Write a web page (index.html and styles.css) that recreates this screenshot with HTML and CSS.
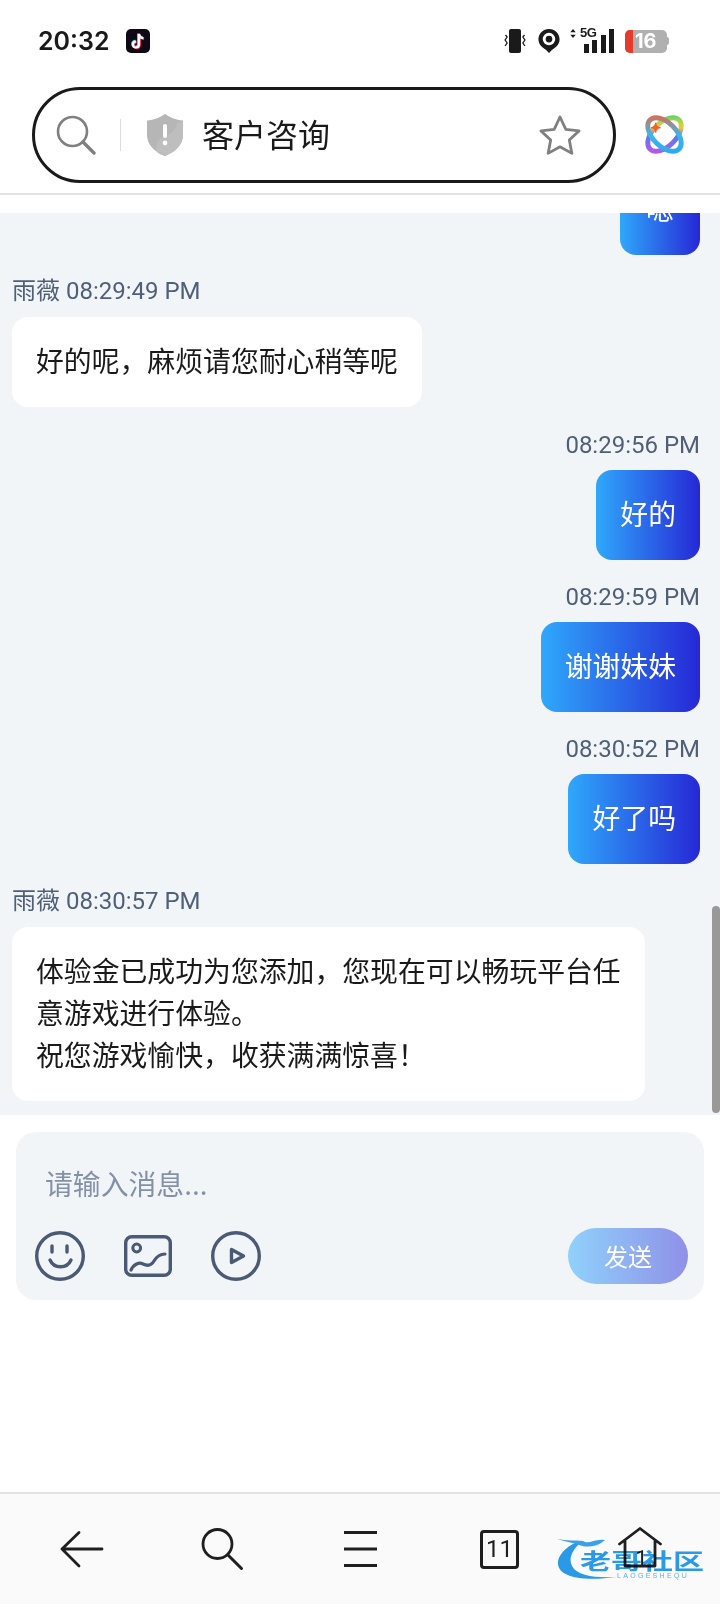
FILE: index.html
```html
<!DOCTYPE html>
<html lang="zh">
<head>
<meta charset="utf-8">
<title>客户咨询</title>
<link rel="stylesheet" href="styles.css">
</head>
<body>
<div class="page">
  <header class="status">
    <div class="status-left">
      <span class="clock">20:32</span>
      <svg class="tiktok" viewBox="0 0 24 24">
        <rect width="24" height="24" rx="5" fill="#0d0a16"/>
        <path d="M13 5v10.500a3 3 0 1 1-3-3M13 5c.3 2.600 2 4 4.400 4.200" fill="none" stroke="#25f4ee" stroke-width="2.400" transform="translate(-.7 -.5)"/>
        <path d="M13 5v10.500a3 3 0 1 1-3-3M13 5c.3 2.600 2 4 4.400 4.200" fill="none" stroke="#fe2c55" stroke-width="2.400" transform="translate(.7 .5)"/>
        <path d="M13 5v10.500a3 3 0 1 1-3-3M13 5c.3 2.600 2 4 4.400 4.200" fill="none" stroke="#fff" stroke-width="2.200"/>
      </svg>
    </div>
    <div class="status-right">
      <svg class="ic-vib" viewBox="0 0 24 24">
        <rect x="6" y="0" width="12" height="24" rx="2" fill="#1a1a1a"/>
        <path d="M2.500 6l1.600 2-2 3 2 3-2 3M21.500 6l-1.600 2 2 3-2 3 2 3" fill="none" stroke="#1a1a1a" stroke-width="1.300"/>
      </svg>
      <svg class="ic-pin" viewBox="0 0 22 25">
        <path d="M11 0C4.900 0 0 4.800 0 10.800c0 5.600 4.200 8.800 8 11.200l3 3 3-3c3.800-2.400 8-5.600 8-11.200C22 4.800 17.100 0 11 0z" fill="#1a1a1a"/>
        <circle cx="11" cy="10.500" r="6.500" fill="#fff"/>
        <circle cx="11" cy="10.500" r="3.500" fill="#1a1a1a"/>
      </svg>
      <div class="signal">
        <span class="net">5G</span>
        <svg class="arrows" viewBox="0 0 6 10"><path d="M3 0l3 3.700H0zM3 10L0 6.300h6z" fill="#1a1a1a"/></svg>
        <i class="bar b1"></i><i class="bar b2"></i><i class="bar b3"></i><i class="bar b4"></i>
      </div>
      <div class="battery"><i class="charge"></i><span class="level">16</span></div>
      <i class="battery-tip"></i>
    </div>
  </header>

  <nav class="topbar">
    <div class="address">
      <svg class="ic-search" viewBox="0 0 40 40">
        <circle cx="16.500" cy="16.500" r="14.500" fill="none" stroke="#808080" stroke-width="2.600"/>
        <path d="M27 27l11 11" stroke="#808080" stroke-width="3.400" stroke-linecap="round"/>
      </svg>
      <i class="divider"></i>
      <svg class="ic-shield" viewBox="0 0 36 42">
        <path d="M18 0c4 3 11 6 18 6.500V21c0 10-8 17-18 21C8 38 0 31 0 21V6.500C7 6 14 3 18 0z" fill="#b6b6b6"/>
        <path d="M10 38c-2-8 2-14 8-16 6-2 10-6 12-12l6-3V21c0 10-8 17-18 21-3-1-6-2-8-4z" fill="#bebebe"/>
        <rect x="16" y="10" width="4" height="14" rx="2" fill="#fff"/>
        <circle cx="18" cy="29" r="2.400" fill="#fff"/>
      </svg>
      <span class="page-title">客户咨询</span>
      <svg class="ic-star" viewBox="0 0 42 40">
        <path d="M21 2l5.800 12.400 13.200 1.500-9.700 9.200 2.600 13.300L21 31.800 9.100 38.400l2.600-13.300L2 15.900l13.200-1.500z" fill="none" stroke="#808080" stroke-width="2.800" stroke-linejoin="round"/>
      </svg>
    </div>
    <svg class="ic-app" viewBox="0 0 40 40">
      <defs>
        <linearGradient id="loop-a" gradientUnits="userSpaceOnUse" x1="4" y1="4" x2="36" y2="36">
          <stop offset="0" stop-color="#f4603a"/>
          <stop offset=".5" stop-color="#3fb6e8"/>
          <stop offset="1" stop-color="#27a8f0"/>
        </linearGradient>
        <linearGradient id="loop-b" gradientUnits="userSpaceOnUse" x1="36" y1="4" x2="4" y2="36">
          <stop offset="0" stop-color="#3cc98a"/>
          <stop offset=".2" stop-color="#a8d64a"/>
          <stop offset=".35" stop-color="#f7c43a"/>
          <stop offset=".55" stop-color="#5a78f0"/>
          <stop offset="1" stop-color="#d04fe0"/>
        </linearGradient>
      </defs>
      <ellipse cx="20" cy="20" rx="21" ry="12" transform="rotate(-45 20 20)" fill="none" stroke="url(#loop-b)" stroke-width="5"/>
      <ellipse cx="20" cy="20" rx="21" ry="12" transform="rotate(45 20 20)" fill="none" stroke="url(#loop-a)" stroke-width="5"/>
      <path d="M11 7.500c.6 3.200 1.800 4.400 5 5-3.200.6-4.400 1.800-5 5-.6-3.200-1.800-4.400-5-5 3.200-.6 4.400-1.800 5-5z" fill="#f2602a" stroke="#f2602a" stroke-width="1" transform="translate(0 .5)"/>
    </svg>
  </nav>

  <main class="chat">
    <div class="thread">
      <div class="msg user">
        <div class="bubble bubble-min">嗯</div>
      </div>
      <div class="msg agent">
        <div class="meta">雨薇 08:29:49 PM</div>
        <div class="bubble">好的呢，麻烦请您耐心稍等呢</div>
      </div>
      <div class="msg user">
        <div class="meta">08:29:56 PM</div>
        <div class="bubble">好的</div>
      </div>
      <div class="msg user">
        <div class="meta">08:29:59 PM</div>
        <div class="bubble">谢谢妹妹</div>
      </div>
      <div class="msg user">
        <div class="meta">08:30:52 PM</div>
        <div class="bubble">好了吗</div>
      </div>
      <div class="msg agent">
        <div class="meta">雨薇 08:30:57 PM</div>
        <div class="bubble">体验金已成功为您添加，您现在可以畅玩平台任<br>意游戏进行体验。<br>祝您游戏愉快，收获满满惊喜！</div>
      </div>
    </div>
    <i class="scrollbar"></i>
  </main>

  <section class="composer">
    <div class="card">
      <div class="placeholder">请输入消息...</div>
      <div class="tools">
        <svg class="tool" viewBox="0 0 50 50">
          <circle cx="25" cy="25" r="23.300" fill="none" stroke="#4a5a75" stroke-width="3.400"/>
          <path d="M17 15v6M32 15v6" stroke="#4a5a75" stroke-width="3.400" stroke-linecap="round"/>
          <path d="M15 29c4 9 17 9 21 0" fill="none" stroke="#4a5a75" stroke-width="3.400" stroke-linecap="round"/>
        </svg>
        <svg class="tool tool-img" viewBox="0 0 48 42">
          <rect x="1.700" y="1.700" width="44.600" height="38.600" rx="6" fill="none" stroke="#4a5a75" stroke-width="3.400"/>
          <circle cx="12.700" cy="13" r="3.900" fill="none" stroke="#4a5a75" stroke-width="3"/>
          <path d="M7 35c3-6 8-8 12-6s8 2 11-3 6-7 11-7" fill="none" stroke="#4a5a75" stroke-width="3.200" stroke-linecap="round"/>
        </svg>
        <svg class="tool tool-play" viewBox="0 0 50 50">
          <circle cx="25" cy="25" r="23.300" fill="none" stroke="#4a5a75" stroke-width="3.400"/>
          <path d="M20.500 18.500v13l12-6.500z" fill="none" stroke="#4a5a75" stroke-width="3.400" stroke-linejoin="round"/>
        </svg>
        <button class="send">发送</button>
      </div>
    </div>
  </section>

  <footer class="navbar">
    <svg class="nav-ic" viewBox="0 0 44 36">
      <path d="M42 18H2M19 1.500L2 18l17 17" fill="none" stroke="#1f1f1f" stroke-width="2.800" stroke-linecap="round" stroke-linejoin="round"/>
    </svg>
    <svg class="nav-ic" viewBox="0 0 44 44">
      <circle cx="17.500" cy="17" r="14.500" fill="none" stroke="#1f1f1f" stroke-width="2.800"/>
      <path d="M28.500 28.500l13 13" stroke="#1f1f1f" stroke-width="3" stroke-linecap="round"/>
    </svg>
    <svg class="nav-ic" viewBox="0 0 44 36">
      <path d="M5 1.500h33M5 18h33M5 34.500h33" stroke="#1f1f1f" stroke-width="2.800"/>
    </svg>
    <div class="tabs">11</div>
    <div class="home">
      <svg class="home-ic" viewBox="0 0 44 44">
        <path d="M1.500 17L22 1.500 42.500 17M7 14v25h30V14" fill="none" stroke="#1f1f1f" stroke-width="2.800" stroke-linecap="round" stroke-linejoin="round"/>
      </svg>
      <span class="home-num">1</span>
    </div>
    <div class="watermark">
      <svg class="dragon" viewBox="0 0 150 50">
        <path d="M22 10C8 16 2 26 3 32c1 12 21 18 59 13-22 1-40-1-45-11-4-8 1-16 7-22z" fill="#2b9ceb"/>
        <path d="M2 7c10 2 18 1 26 2 6 4 12-3 22-1l-4 3c-6 4-16 5-24 1C14 10 8 9 2 7z" fill="#3aa4ee"/>
      </svg>
      <span class="wm-title">老哥社区</span>
      <span class="wm-sub">LAOGESHEQU</span>
    </div>
  </footer>
</div>
</body>
</html>
```
FILE: styles.css
```css
* { box-sizing: border-box; }
html, body { margin: 0; padding: 0; background: #fff; }
body { font-family: Roboto, "Noto Sans CJK SC", sans-serif; }
.page { width: 720px; height: 1604px; display: flex; flex-direction: column; overflow: hidden; }

.status { height: 87px; padding: 24px 51px 0 38px; display: flex; justify-content: space-between; align-items: flex-start; flex: none; }
.status-left { display: flex; align-items: center; gap: 16px; height: 34px; }
.clock { font: 600 25px/34px Inter, Roboto, sans-serif; color: #1a1a1a; }
.tiktok { width: 24px; height: 24px; }
.status-right { display: flex; align-items: center; height: 34px; }
.ic-vib { width: 24px; height: 24px; margin-right: 11px; }
.ic-pin { width: 22px; height: 24px; margin-right: 10px; }
.signal { position: relative; width: 44px; height: 24px; display: flex; align-items: flex-end; justify-content: flex-end; gap: 3.500px; margin-right: 11px; }
.net { position: absolute; left: 10px; top: -3px; font: 700 13px/14px "Liberation Sans", sans-serif; color: #1a1a1a; letter-spacing: -0.5px; }
.arrows { position: absolute; left: 0; top: 0; width: 6px; height: 9px; }
.bar { width: 5px; background: #1a1a1a; display: block; }
.b1 { height: 9px; } .b2 { height: 13px; } .b3 { height: 18px; } .b4 { height: 24px; }
.battery { width: 42px; height: 23px; background: #b0b0b0; border-radius: 5px; display: flex; align-items: center; overflow: hidden; }
.charge { width: 8px; height: 23px; background: #e63a2c; display: block; }
.level { font: 700 20px/23px Inter, Roboto, sans-serif; color: #fff; margin-left: 2px; }
.battery-tip { width: 2px; height: 8px; background: #b0b0b0; display: block; border-radius: 0 2px 2px 0; }

.topbar { height: 108px; flex: none; display: flex; align-items: flex-start; border-bottom: 2px solid #e2e2e2; padding-left: 32px; }
.address { width: 584px; height: 96px; border: 3px solid #1a1a1a; border-radius: 48px; display: flex; align-items: center; padding-left: 21px; }
.ic-search { width: 40px; height: 40px; margin-right: 24px; }
.divider { width: 1px; height: 32px; background: #dcdcdc; display: block; margin-right: 26px; }
.ic-shield { width: 36px; height: 42px; margin-right: 19px; }
.page-title { font: 400 32px/44px "Noto Sans CJK SC", sans-serif; color: #1a1a1a; flex: 1; padding-bottom: 4px; }
.ic-star { width: 42px; height: 40px; margin-right: 32px; }
.ic-app { width: 39px; height: 39px; margin: 28px 0 0 29px; }

.chat { height: 902px; margin-top: 18px; background: #f2f5f8; position: relative; overflow: hidden; flex: none; display: flex; flex-direction: column; justify-content: flex-end; }
.thread { padding: 0 20px 13px 12px; display: flex; flex-direction: column; gap: 23px; }
.msg { display: flex; flex-direction: column; gap: 11px; }
.msg.user { align-items: flex-end; }
.msg.agent { align-items: flex-start; margin-bottom: 1px; }
.meta { font: 400 24px/28px Roboto, "Noto Sans CJK SC", sans-serif; color: #4f5f78; }
.agent .meta { line-height: 29px; }
.bubble { padding: 22px 24px 26px; border-radius: 16px; font: 400 27.850px/42px "Noto Sans CJK SC", sans-serif; white-space: nowrap; }
.bubble-min { min-width: 80px; text-align: center; margin-bottom: -1px; }
.user .bubble { color: #fff; background: linear-gradient(90deg, #2fa8fb, #2628d6); }
.agent .bubble { color: #1a1a1a; background: #fff; }
.scrollbar { position: absolute; right: 0; top: 693px; width: 8px; height: 207px; background: #999; border-radius: 4px; display: block; }

.composer { flex: 1; padding: 17px 16px 0; }
.card { height: 168px; background: #f2f5f8; border-radius: 20px; padding: 0 16px 0 19px; display: flex; flex-direction: column; }
.placeholder { font: 400 27.850px/40px "Noto Sans CJK SC", sans-serif; color: #8391a6; padding: 31px 0 0 10px; height: 96px; }
.tools { display: flex; align-items: center; height: 56px; }
.tool { width: 50px; height: 50px; margin-right: 39px; }
.tool-img { width: 48px; height: 42px; }
.tool-play { margin-right: 0; }
.send { margin-left: auto; width: 120px; height: 56px; border: 0; border-radius: 28px; color: #fff; font: 400 24px/56px "Noto Sans CJK SC", sans-serif; background: linear-gradient(90deg, #8fd2fb, #8f90e8); padding: 0; }

.navbar { height: 112px; flex: none; background: #fafafa; border-top: 2px solid #e2e2e2; display: flex; align-items: center; justify-content: space-between; padding: 0 58px 0 60px; position: relative; }
.nav-ic { width: 44px; height: 44px; }
.tabs { width: 39px; height: 39px; margin: 0 3.500px 0 1.500px; border: 3px solid #1f1f1f; border-radius: 4px; font: 400 24px/33px Roboto, sans-serif; text-align: center; color: #1f1f1f; }
.home { width: 44px; height: 44px; position: relative; }
.home-ic { width: 44px; height: 44px; display: block; }
.home-num { position: absolute; left: 3px; right: 0; bottom: -2px; text-align: center; font: 400 22px/28px Roboto, sans-serif; color: #1f1f1f; }
.watermark { position: absolute; left: 555px; top: 38px; width: 152px; height: 52px; mix-blend-mode: multiply; filter: blur(0.4px); }
.dragon { position: absolute; left: 0; top: 0; width: 150px; height: 50px; }
.wm-title { position: absolute; left: 25px; top: 18px; width: 124px; font: 700 31px/20px "Noto Sans CJK SC", sans-serif; color: #2b9ceb; white-space: nowrap; transform: scaleY(0.68); transform-origin: left center; }
.wm-sub { position: absolute; left: 62px; top: 40px; font: 400 7px/8px "Liberation Sans", sans-serif; color: #5fb5ee; letter-spacing: 2.300px; white-space: nowrap; }
```
